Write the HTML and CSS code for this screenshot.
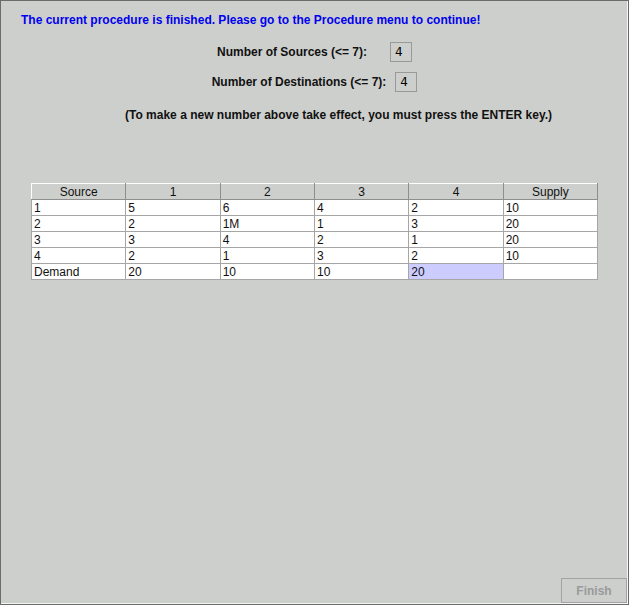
FILE: index.html
```html
<!DOCTYPE html>
<html>
<head>
<meta charset="utf-8">
<link rel="stylesheet" href="styles.css">
</head>
<body>
<div class="frame">
  <div class="message">The current procedure is finished. Please go to the Procedure menu to continue!</div>
  <div class="field-row row-sources">
    <span class="label">Number of Sources (&lt;= 7):</span>
    <span class="input">4</span>
  </div>
  <div class="field-row row-dest">
    <span class="label">Number of Destinations (&lt;= 7):</span>
    <span class="input">4</span>
  </div>
  <div class="hint">(To make a new number above take effect, you must press the ENTER key.)</div>
  <table class="grid">
    <thead>
      <tr><th>Source</th><th>1</th><th>2</th><th>3</th><th>4</th><th>Supply</th></tr>
    </thead>
    <tbody>
      <tr><td>1</td><td>5</td><td>6</td><td>4</td><td>2</td><td>10</td></tr>
      <tr><td>2</td><td>2</td><td>1M</td><td>1</td><td>3</td><td>20</td></tr>
      <tr><td>3</td><td>3</td><td>4</td><td>2</td><td>1</td><td>20</td></tr>
      <tr><td>4</td><td>2</td><td>1</td><td>3</td><td>2</td><td>10</td></tr>
      <tr><td>Demand</td><td>20</td><td>10</td><td>10</td><td class="selected">20</td><td></td></tr>
    </tbody>
  </table>
  <div class="spacer"></div>
  <div class="footer">
    <button class="finish" disabled>Finish</button>
  </div>
</div>
</body>
</html>
```
FILE: styles.css
```css
html, body {
  margin: 0;
  padding: 0;
  background: #cdcfcc;
}
.frame {
  width: 629px;
  height: 605px;
  box-sizing: border-box;
  border: 1px solid #6b6b6b;
  box-shadow: inset -1px -1px 0 #f4f4f4;
  background: #cdcfcc;
  display: flex;
  flex-direction: column;
  font-family: "Liberation Sans", Arial, sans-serif;
  color: #111;
}
.message {
  color: #0000f0;
  font-weight: bold;
  font-size: 12px;
  line-height: 16px;
  padding: 11px 0 0 20px;
  white-space: nowrap;
}
.field-row {
  display: flex;
  align-items: center;
  justify-content: center;
  height: 20px;
  font-weight: bold;
  font-size: 12px;
}
.row-sources { margin-top: 14px; }
.row-dest { margin-top: 10px; }
.row-sources .label { margin-right: 23px; }
.row-dest .label { margin-right: 9px; }
.input {
  box-sizing: border-box;
  width: 22px;
  height: 20px;
  border: 1px solid #999;
  font-family: "DejaVu Sans", sans-serif;
  font-weight: normal;
  font-size: 12px;
  line-height: 18px;
  padding-left: 4px;
  color: #000;
}
.hint {
  font-weight: bold;
  font-size: 12px;
  line-height: 16px;
  margin-top: 15px;
  padding-left: 124px;
  white-space: nowrap;
}
.grid {
  margin: 60px 0 0 30px;
  width: 567px;
  border-collapse: collapse;
  table-layout: fixed;
  font-size: 12px;
}
.grid th {
  height: 16px;
  padding: 0;
  box-sizing: border-box;
  background: #cdcfcc;
  font-weight: normal;
  text-align: center;
  border-top: 1px solid #fff;
  border-left: 1px solid #fff;
  border-right: 1px solid #8e8e8e;
  border-bottom: 1px solid #8e8e8e;
  line-height: 14px;
  color: #111;
}
.grid td {
  height: 16px;
  padding: 0 0 0 2px;
  box-sizing: border-box;
  background: #fff;
  border: 1px solid #a6a6a6;
  line-height: 14px;
  color: #111;
}
.grid td.selected {
  background: #ccccff;
}
.spacer { flex: 1; }
.footer {
  display: flex;
  justify-content: flex-end;
  padding: 0 1px 1px 0;
}
.finish {
  width: 66px;
  height: 25px;
  box-sizing: border-box;
  background: #cdcfcc;
  border: 1px solid #a3a3a3;
  color: #9a9a9a;
  font-family: "Liberation Sans", Arial, sans-serif;
  font-weight: bold;
  font-size: 12px;
  padding: 0;
}
```
